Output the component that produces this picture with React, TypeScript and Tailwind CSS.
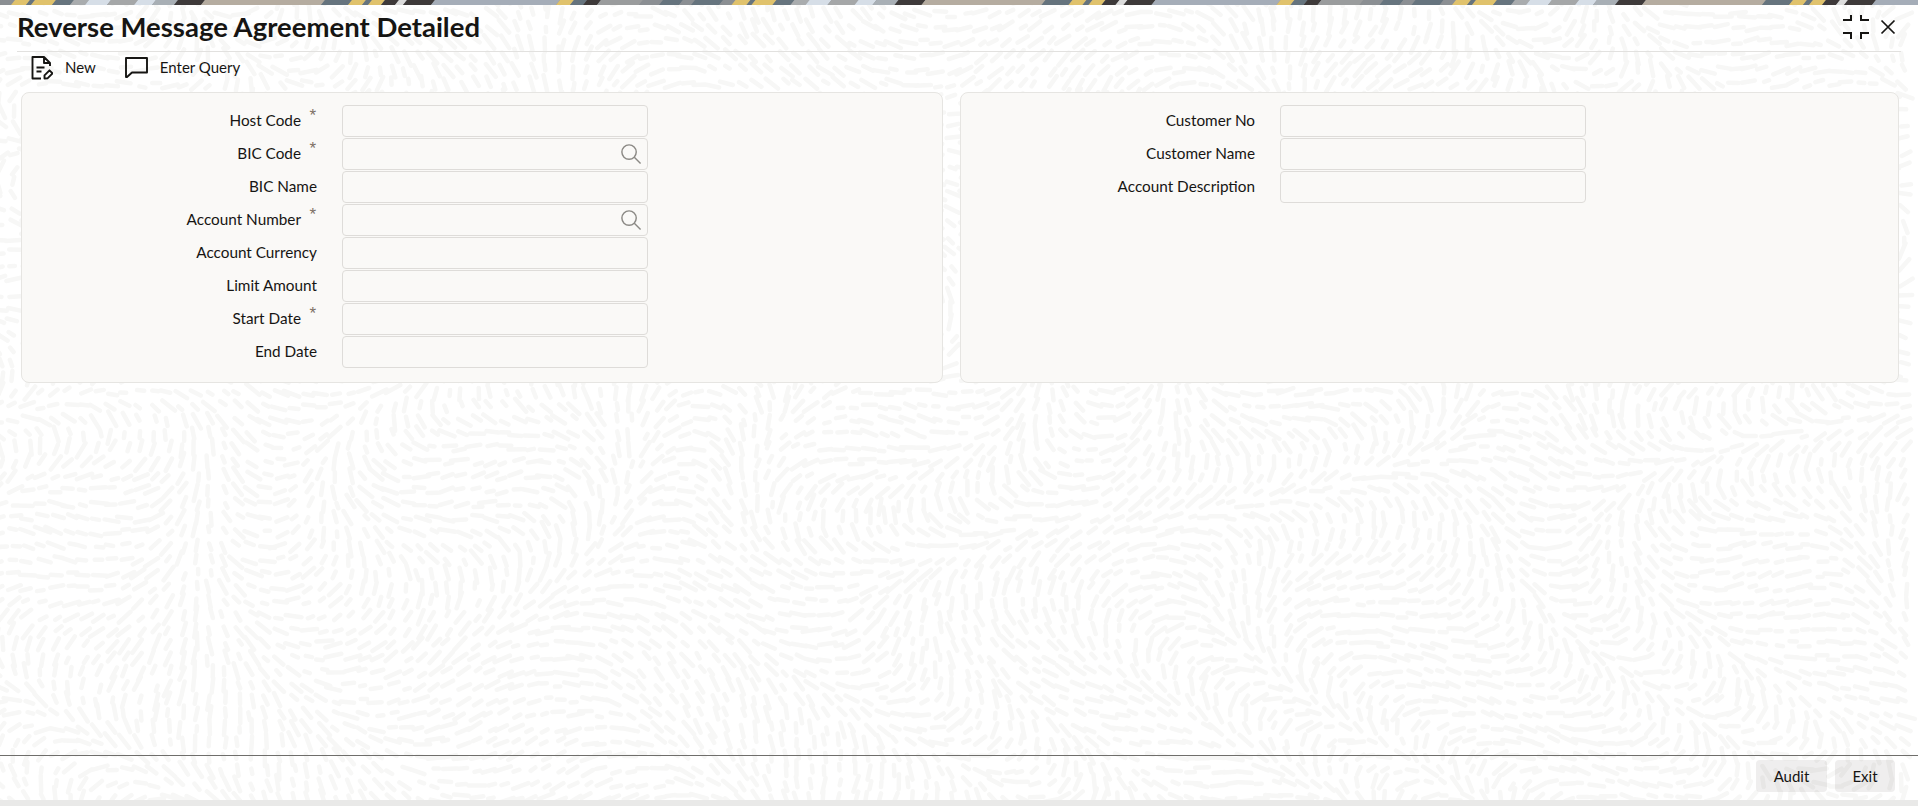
import React from "react";

const strip: [number, number, string][] = [
  [0, 12, "#8b8f93"], [12, 27, "#e0c26c"], [27, 32, "#66747e"], [32, 53, "#e0c26c"], [53, 71, "#66747e"],
  [71, 86, "#a9acae"], [86, 108, "#d6dee7"], [108, 135, "#a5a7a8"], [135, 153, "#d6dee7"], [153, 175, "#a8afb5"],
  [175, 202, "#3e3a3a"], [202, 322, "#b5aca0"], [322, 349, "#66747e"], [349, 363, "#e0c26c"], [363, 369, "#66747e"],
  [369, 382, "#e0c26c"], [382, 396, "#3e3a3a"], [396, 404, "#dcdcdc"], [404, 432, "#3e3a3a"], [432, 557, "#a5adb8"],
  [557, 571, "#e0c26c"], [571, 584, "#66747e"], [584, 598, "#3e3a3a"], [598, 640, "#9a9c9d"], [640, 660, "#8b8f93"],
  [660, 680, "#66747e"], [680, 692, "#8b8f93"], [692, 720, "#66747e"],
];

function Strip() {
  const polys: React.ReactElement[] = [];
  for (let r = 0; r < 3; r++) {
    strip.forEach(([a, b, c], i) => {
      const o = r * 720.5;
      polys.push(<polygon key={`${r}-${i}`} points={`${o + a - 1},5 ${o + b - 1},5 ${o + b + 3},0 ${o + a + 3},0`} fill={c} />);
    });
  }
  return (
    <svg className="block w-full h-[5px] shrink-0" viewBox="0 0 1918 5" preserveAspectRatio="none">
      <rect width="1918" height="5" fill="#8b8f93" />
      {polys}
    </svg>
  );
}

function buildTexture() {
  let seed = 12345;
  const rnd = () => {
    seed = (seed * 16807) % 2147483647;
    return seed / 2147483647;
  };
  const angle = (x: number, y: number) =>
    2.0 * Math.sin(x / 110 + 1.3 * Math.cos(y / 95)) + 1.5 * Math.cos(y / 80 - x / 170);
  let d = "";
  const step = 14;
  for (let y = 0; y < 806; y += step) {
    for (let x = 0; x < 1918; x += step) {
      const cx = x + (rnd() - 0.5) * 6;
      const cy = y + (rnd() - 0.5) * 6;
      const a = angle(cx, cy) + (rnd() - 0.5) * 0.3;
      const len = 2.5 + rnd() * 6;
      const dx = Math.cos(a) * len;
      const dy = Math.sin(a) * len;
      d += `M${(cx - dx).toFixed(1)} ${(cy - dy).toFixed(1)}L${(cx + dx).toFixed(1)} ${(cy + dy).toFixed(1)}`;
    }
  }
  return d;
}
const texture = buildTexture();

function Search() {
  return (
    <svg width="23" height="23" viewBox="0 0 24 24" fill="none" stroke="#8b8985" strokeWidth="1.5" className="absolute right-[5px] top-[3px]">
      <circle cx="10.5" cy="10.5" r="7.5" />
      <path d="M16 16l6.5 6.5" />
    </svg>
  );
}

function Field({ label, req, search, right, low }: { label: string; req?: boolean; search?: boolean; right?: boolean; low?: boolean }) {
  return (
    <div className={`flex items-center h-[32px] mb-px ${low ? "mt-px" : ""}`}>
      <div className={`${right ? "w-[294px]" : "w-[295px]"} flex justify-end items-center text-[15.3px] leading-none text-[#161513] shrink-0`}>
        <span>{label}</span>
        {req && <span className="w-[16px] pr-px text-right font-['Liberation_Sans'] text-[17px] text-[#7d7166] leading-none -translate-y-[6px]">*</span>}
      </div>
      <div className="relative ml-[25px] w-[306px] h-[32px] rounded-[4px] border border-[#dedcd9] bg-[#faf9f7]">
        {search && <Search />}
      </div>
    </div>
  );
}

export default function App() {
  return (
    <div className="relative h-[806px] w-full overflow-hidden bg-white flex flex-col font-['Lato','Noto_Sans',sans-serif] text-[#161513]">
      <svg className="absolute inset-0 pointer-events-none" width="1918" height="806" viewBox="0 0 1918 806">
        <path d={texture} stroke="#f7f7f6" strokeWidth="4.5" strokeLinecap="round" fill="none" />
      </svg>
      <div className="relative flex flex-col flex-1 min-h-0">
        <Strip />
        <div className="mx-[17px] h-[47px] flex items-center justify-between border-b border-[#e2e1df] pb-[2px]">
          <h1 className="text-[27.5px] font-bold leading-none">Reverse Message Agreement Detailed</h1>
          <div className="flex items-center gap-[11px] pr-[5px]">
            <svg width="26" height="24" viewBox="0 0 26 24" fill="none" stroke="#161513" strokeWidth="2">
              <path d="M0 5h8V0M18 0v5h8M0 18h8v6M26 18h-8v6" />
            </svg>
            <svg width="16" height="16" viewBox="0 0 16 16" fill="none" stroke="#161513" strokeWidth="1.7">
              <path d="M1.5 1.5l13 13M14.5 1.5l-13 13" />
            </svg>
          </div>
        </div>
        <div className="flex items-center h-[31px] pl-[31px] text-[15px]">
          <svg width="22" height="24" viewBox="0 0 22 24" fill="none" stroke="#161513" strokeWidth="1.9">
            <path d="M10 22.5H1.5V1H13l6 6v3M13 1v6h6M5.5 11.5h8M5.5 15.5h5" strokeLinejoin="round" />
            <path d="M13.5 22.5v-3.2l5-5 3 3-5 5z" strokeLinejoin="round" />
          </svg>
          <span className="ml-[12px]">New</span>
          <svg className="ml-[29px]" width="23" height="21" viewBox="0 0 23 21" fill="none" stroke="#161513" strokeWidth="1.9">
            <path d="M1 1h21v14.5H7L2 20H1z" strokeLinejoin="round" />
          </svg>
          <span className="ml-[12px]">Enter Query</span>
        </div>
        <div className="flex pl-[21px] pr-[19px] gap-[17px] mt-[9px]">
          <div className="w-[922px] h-[291px] rounded-[8px] border border-[#e6e5e2] bg-[#faf9f7] pt-[12px]">
            <Field label="Host Code" req />
            <Field label="BIC Code" req search />
            <Field label="BIC Name" />
            <Field label="Account Number" req search />
            <Field label="Account Currency" />
            <Field label="Limit Amount" />
            <Field label="Start Date" req />
            <Field label="End Date" low />
          </div>
          <div className="flex-1 h-[291px] rounded-[8px] border border-[#e6e5e2] bg-[#faf9f7] pt-[12px]">
            <Field right label="Customer No" />
            <Field right label="Customer Name" />
            <Field right label="Account Description" />
          </div>
        </div>
        <div className="mt-auto border-t border-[#6f6e6b] h-[45px] flex items-start justify-end gap-[8px] pr-[23px] pt-[4px] text-[15px]">
          <button className="w-[71px] h-[32px] rounded-[4px] bg-[#161513]/[0.07]">Audit</button>
          <button className="w-[60px] h-[32px] rounded-[4px] bg-[#161513]/[0.07]">Exit</button>
        </div>
        <div className="h-[6px] shrink-0 bg-[#e9e9e8]" />
      </div>
    </div>
  );
}
